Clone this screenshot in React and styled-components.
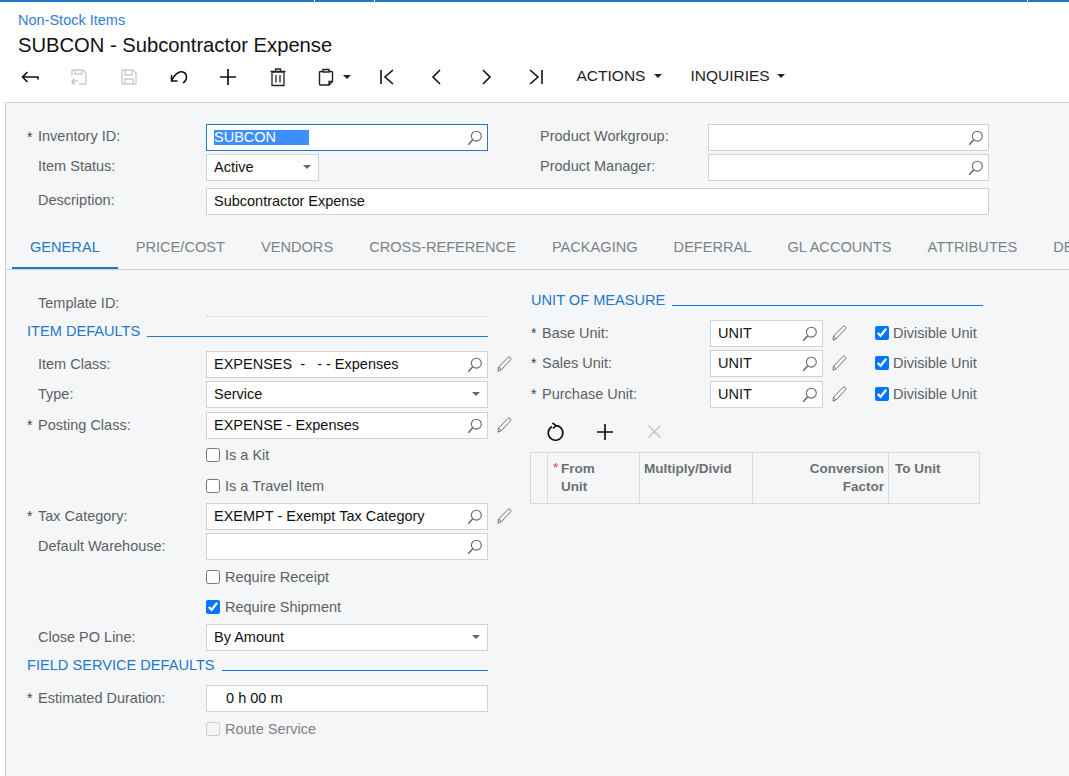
import React from "react";
import styled, { createGlobalStyle } from "styled-components";

const Global = createGlobalStyle`
	html, body {
		margin: 0;
		height: 100%;
		overflow: hidden;
		background: #fff;
		font-family: "Liberation Sans", Arial, sans-serif;
		font-size: 15px;
	}
	* { box-sizing: border-box; }
`;

const BLUE = "#2278c8";

/* icons */
const Svg = ({ size = 20, children, color = "#111", width = 1.6 }) => (
	<svg width={size} height={size} viewBox="0 0 20 20" fill="none" stroke={color} strokeWidth={width}>
		{children}
	</svg>
);

const BackIcon = () => <Svg><path d="M18 10H2.500M7.500 5l-5 5 5 5" /><path d="M18 9.500v3" /></Svg>;
const SaveBackIcon = () => (
	<Svg color="#c9c9c9" width={1.3}>
		<path d="M3 9V3h11l3 3v11H10M6 3v4h7V3M3 14h6M5.500 11.500L3 14l2.500 2.500M3 14c0 2 1 3 3 3" />
	</Svg>
);
const SaveIcon = () => (
	<Svg color="#c9c9c9" width={1.3}>
		<path d="M3 3h11l3 3v11H3zM6 3v5h7V3M6 17v-5h8v5" />
	</Svg>
);
const UndoIcon = () => (
	<Svg width={1.5}>
		<path d="M2.500 8v6h6" />
		<path d="M2.500 14C6 6 11.500 3.500 15 5.500c3.500 2 3.500 7.500-1 10.500" />
	</Svg>
);
const PlusIcon = ({ size = 20 }) => <Svg size={size} width={1.7}><path d="M10 2v16M2 10h16" /></Svg>;
const TrashIcon = () => (
	<Svg width={1.3} color="#222">
		<path d="M4 5h12v13.500H4zM2.500 4.500h15M7.500 4V2h5v2M8 8v7.500M12 8v7.500" />
	</Svg>
);
const NotesIcon = () => (
	<Svg width={1.4} color="#222">
		<path d="M7 4.500H4.500c-.6 0-1 .4-1 1V17c0 .6.4 1 1 1h8.500l3.500-3.500V5.500c0-.6-.4-1-1-1H13M7 5V2.500h6V5zM13 18v-3.500h3.500" />
	</Svg>
);
const FirstIcon = () => <Svg><path d="M4 3v14M16 3l-8 7 8 7" /></Svg>;
const PrevIcon = () => <Svg><path d="M13 3l-7 7 7 7" /></Svg>;
const NextIcon = () => <Svg><path d="M7 3l7 7-7 7" /></Svg>;
const LastIcon = () => <Svg><path d="M4 3l8 7-8 7M16 3v14" /></Svg>;
const RefreshIcon = () => <Svg><path d="M6 4.500a7.300 7.300 0 1 0 4-.9M6.500 1L10 3.600 7 6.500" /></Svg>;
const CloseIcon = () => <Svg color="#c4c4c4" width={1.5}><path d="M3.500 3.500l12 12M15.500 3.500l-12 12" /></Svg>;
const SearchIcon = () => (
	<Svg size={18} color="#666" width={1.2}>
		<circle cx="11.500" cy="8" r="5.500" />
		<path d="M7.500 12L2.500 17.500" strokeWidth="1.700" />
	</Svg>
);
const PencilIcon = () => (
	<Svg size={18} color="#707070" width={1.1}>
		<path d="M2.800 13.500L13.500 2.500c1.200-1.100 3.800 1 2.900 2.600L5.800 16.500 2.300 18z" />
		<path d="M3.200 13.500l2.500 3" />
	</Svg>
);

const Caret = styled.span`
	display: inline-block;
	width: 0;
	height: 0;
	border-left: 4px solid transparent;
	border-right: 4px solid transparent;
	border-top: 4px solid ${(props) => props.$color || "#222"};
	margin-left: ${(props) => props.$left || "0"};
`;

/* page chrome */
const Page = styled.div`
	width: 1069px;
	height: 776px;
	overflow: hidden;
	display: flex;
	flex-direction: column;
`;

const TopBar = styled.div`
	height: 2px;
	flex: none;
	display: flex;
	background: ${BLUE};
`;

const TopTick = styled.span`
	width: 1px;
	height: 2px;
	background: #fff;
	margin-left: ${(props) => props.$left};
`;

const Header = styled.div`
	flex: none;
	height: 100px;
	padding: 9px 0 0 18px;
`;

const Crumb = styled.div`
	color: #2f7fd0;
	font-size: 14.5px;
	line-height: 18px;
`;

const Title = styled.div`
	color: #111;
	font-size: 20.2px;
	line-height: 24px;
	margin-top: 4px;
`;

const Toolbar = styled.div`
	display: flex;
	align-items: center;
	height: 30px;
	margin: 5px 0 0 -13px;
`;

const ToolButton = styled.div`
	flex: none;
	width: ${(props) => props.$width || "49.6px"};
	height: 30px;
	padding-left: ${(props) => props.$pad || "0"};
	display: flex;
	align-items: center;
	justify-content: center;
`;

const ToolMenu = styled.div`
	flex: none;
	margin-left: ${(props) => props.$left};
	padding-bottom: 2px;
	display: flex;
	align-items: center;
	color: #222;
	font-size: 15.5px;
`;

const Panel = styled.div`
	flex: 1;
	margin-left: 5px;
	background: #f5f6f8;
	border-top: 1px solid #d2d2d2;
	border-left: 1px solid #d2d2d2;
`;

/* summary */
const Summary = styled.div`
	padding: 21px 0 0 21px;
`;

const Columns = styled.div`
	display: flex;
`;

const SummaryLeft = styled.div`
	width: 513px;
`;

const Row = styled.div`
	display: flex;
	align-items: flex-start;
	margin-top: ${(props) => props.$mt || 0}px;
`;

const Required = styled.span`
	flex: none;
	width: 11px;
	color: #444;
	font-size: 14px;
	line-height: 27px;
`;

const Label = styled.label`
	flex: none;
	width: ${(props) => props.$width || "168px"};
	color: #5c6166;
	font-size: 14.5px;
	line-height: 24px;
`;

const Field = styled.div`
	flex: none;
	width: ${(props) => props.$width};
	height: 27px;
	padding: 0 7px 2px 7px;
	display: flex;
	align-items: center;
	justify-content: space-between;
	background: #fff;
	border: 1px solid ${(props) => (props.$focus ? BLUE : "#d2d2d2")};
	color: #111;
	font-size: 14.5px;
	white-space: pre;
`;

const SearchSlot = styled.span`
	flex: none;
	display: flex;
	margin: 0 -4px -2px 0;
`;

const Selected = styled.span`
	display: inline-block;
	width: 95px;
	height: 15px;
	line-height: 15px;
	background: #3d8ffd;
	color: #fff;
`;

const FieldAction = styled.span`
	flex: none;
	display: flex;
	margin: 4px 0 0 8px;
`;

/* tabs */
const Tabs = styled.div`
	display: flex;
	height: 43px;
	margin-top: 12px;
	padding-left: 6px;
	border-bottom: 1px solid #d2d2d2;
	overflow: hidden;
`;

const Tab = styled.div`
	flex: none;
	height: 43px;
	padding: 0 18px;
	line-height: 40px;
	font-size: 14.6px;
	color: ${(props) => (props.$active ? BLUE : "#7c8288")};
	border-bottom: 3px solid ${(props) => (props.$active ? BLUE : "transparent")};
`;

/* general tab */
const Body = styled.div`
	display: flex;
	padding: 20px 0 0 21px;

	${Label} {
		line-height: 26px;
	}
`;

const LeftColumn = styled.div`
	flex: none;
	width: 504px;
`;

const RightColumn = styled.div`
	flex: none;
	width: 452px;
`;

const TemplateValue = styled.div`
	flex: none;
	width: 282px;
	height: 27px;
	border-bottom: 1px dotted #d2d2d2;
`;

const Section = styled.div`
	display: flex;
	align-items: center;
	height: 20px;
	width: ${(props) => props.$width};
	margin-top: ${(props) => props.$mt || 0}px;
	color: ${BLUE};
	font-size: 14.6px;
	white-space: nowrap;

	&::after {
		content: "";
		flex: 1;
		height: 1px;
		margin: 10px 0 0 7px;
		background: ${BLUE};
	}
`;

const CheckRow = styled.label`
	display: flex;
	align-items: center;
	height: 20px;
	margin-top: ${(props) => props.$mt || 0}px;
	margin-left: ${(props) => props.$left || "179px"};
	color: ${(props) => (props.$dim ? "#7c8288" : "#5c6166")};
	font-size: 14.5px;
`;

const Check = styled.input.attrs({ type: "checkbox", readOnly: true })`
	width: 14px;
	height: 14px;
	margin: 0 ${(props) => props.$gap || "5px"} 0 0;
`;

const GridTools = styled.div`
	display: flex;
	align-items: center;
	margin: 9px 0 0 0;
	height: 30px;
`;

const Grid = styled.div`
	display: grid;
	grid-template-columns: 17px 92px 113px 136px 92px;
	width: 450px;
	height: 52px;
	margin: 5px 0 0 -1px;
	border: 1px solid #d9dadc;
`;

const Head = styled.div`
	padding: 7px 4px;
	border-right: 1px solid #d9dadc;
	color: #6b6f73;
	font-size: 13.5px;
	font-weight: bold;
	line-height: 18px;
	text-align: ${(props) => props.$align || "left"};
	position: relative;

	&:last-child {
		border-right: none;
		padding-left: 6px;
	}
`;

const Star = styled.span`
	position: absolute;
	left: 5px;
	top: 6px;
	color: #e33;
	font-weight: normal;
`;

const HeadText = styled.div`
	padding-left: ${(props) => props.$indent || "0"};
`;

const tabs = ["GENERAL", "PRICE/COST", "VENDORS", "CROSS-REFERENCE", "PACKAGING", "DEFERRAL", "GL ACCOUNTS", "ATTRIBUTES", "DESCRIPTION"];

const Lookup = ({ width = "282px", children, focus }) => (
	<Field $width={width} $focus={focus}>
		<span>{children}</span>
		<SearchSlot>
			<SearchIcon />
		</SearchSlot>
	</Field>
);

const Select = ({ width = "282px", children }) => (
	<Field $width={width}>
		<span>{children}</span>
		<Caret $color="#666" />
	</Field>
);

const Edit = () => (
	<FieldAction>
		<PencilIcon />
	</FieldAction>
);

const UnitRow = ({ label, mt }) => (
	<Row $mt={mt}>
		<Required>*</Required>
		<Label>{label}</Label>
		<Lookup width="113px">UNIT</Lookup>
		<Edit />
		<CheckRow $left="26px" $mt={3}>
			<Check defaultChecked $gap="4px" />
			Divisible Unit
		</CheckRow>
	</Row>
);

const App = () => {
	return (
		<Page>
			<Global />
			<TopBar>
				<TopTick $left="314px" />
				<TopTick $left="59px" />
				<TopTick $left="652px" />
			</TopBar>

			<Header>
				<Crumb>Non-Stock Items</Crumb>
				<Title>SUBCON - Subcontractor Expense</Title>
				<Toolbar>
					<ToolButton><BackIcon /></ToolButton>
					<ToolButton><SaveBackIcon /></ToolButton>
					<ToolButton><SaveIcon /></ToolButton>
					<ToolButton><UndoIcon /></ToolButton>
					<ToolButton><PlusIcon /></ToolButton>
					<ToolButton><TrashIcon /></ToolButton>
					<ToolButton $width="59.6px" $pad="3px"><NotesIcon /><Caret $left="7px" /></ToolButton>
					<ToolButton><FirstIcon /></ToolButton>
					<ToolButton><PrevIcon /></ToolButton>
					<ToolButton><NextIcon /></ToolButton>
					<ToolButton><LastIcon /></ToolButton>
					<ToolMenu $left="16px">ACTIONS<Caret $left="9px" /></ToolMenu>
					<ToolMenu $left="28px">INQUIRIES<Caret $left="7px" /></ToolMenu>
				</Toolbar>
			</Header>

			<Panel>
				<Summary>
					<Columns>
						<SummaryLeft>
							<Row>
								<Required>*</Required>
								<Label>Inventory ID:</Label>
								<Lookup focus><Selected>SUBCON</Selected></Lookup>
							</Row>
							<Row $mt={3}>
								<Required />
								<Label>Item Status:</Label>
								<Select width="113px">Active</Select>
							</Row>
						</SummaryLeft>
						<div>
							<Row>
								<Label $width="168px">Product Workgroup:</Label>
								<Lookup width="281px" />
							</Row>
							<Row $mt={3}>
								<Label $width="168px">Product Manager:</Label>
								<Lookup width="281px" />
							</Row>
						</div>
					</Columns>
					<Row $mt={7}>
						<Required />
						<Label>Description:</Label>
						<Field $width="783px">Subcontractor Expense</Field>
					</Row>
				</Summary>

				<Tabs>
					{tabs.map((tab, i) => (
						<Tab key={tab} $active={i === 0}>{tab}</Tab>
					))}
				</Tabs>

				<Body>
					<LeftColumn>
						<Row>
							<Required />
							<Label>Template ID:</Label>
							<TemplateValue />
						</Row>
						<Section $width="461px" $mt={4}>ITEM DEFAULTS</Section>
						<Row $mt={10}>
							<Required />
							<Label>Item Class:</Label>
							<Lookup>EXPENSES  -   - - Expenses</Lookup>
							<Edit />
						</Row>
						<Row $mt={3}>
							<Required />
							<Label>Type:</Label>
							<Select>Service</Select>
						</Row>
						<Row $mt={4}>
							<Required>*</Required>
							<Label>Posting Class:</Label>
							<Lookup>EXPENSE - Expenses</Lookup>
							<Edit />
						</Row>
						<CheckRow $mt={6}><Check />Is a Kit</CheckRow>
						<CheckRow $mt={11}><Check />Is a Travel Item</CheckRow>
						<Row $mt={7}>
							<Required>*</Required>
							<Label>Tax Category:</Label>
							<Lookup>EXEMPT - Exempt Tax Category</Lookup>
							<Edit />
						</Row>
						<Row $mt={3}>
							<Required />
							<Label>Default Warehouse:</Label>
							<Lookup />
						</Row>
						<CheckRow $mt={7}><Check />Require Receipt</CheckRow>
						<CheckRow $mt={10}><Check defaultChecked />Require Shipment</CheckRow>
						<Row $mt={7}>
							<Required />
							<Label>Close PO Line:</Label>
							<Select>By Amount</Select>
						</Row>
						<Section $width="461px" $mt={4}>FIELD SERVICE DEFAULTS</Section>
						<Row $mt={10}>
							<Required>*</Required>
							<Label>Estimated Duration:</Label>
							<Field $width="282px">{"   0 h 00 m"}</Field>
						</Row>
						<CheckRow $mt={7} $dim><Check disabled />Route Service</CheckRow>
					</LeftColumn>

					<RightColumn>
						<Section $width="452px">UNIT OF MEASURE</Section>
						<UnitRow label="Base Unit:" mt={10} />
						<UnitRow label="Sales Unit:" mt={3} />
						<UnitRow label="Purchase Unit:" mt={4} />
						<GridTools>
							<ToolButton><RefreshIcon /></ToolButton>
							<ToolButton><PlusIcon /></ToolButton>
							<ToolButton><CloseIcon /></ToolButton>
						</GridTools>
						<Grid>
							<Head />
							<Head><Star>*</Star><HeadText $indent="9px">From<br />Unit</HeadText></Head>
							<Head>Multiply/Divid</Head>
							<Head $align="right">Conversion<br />Factor</Head>
							<Head>To Unit</Head>
						</Grid>
					</RightColumn>
				</Body>
			</Panel>
		</Page>
	);
};

export default App;
